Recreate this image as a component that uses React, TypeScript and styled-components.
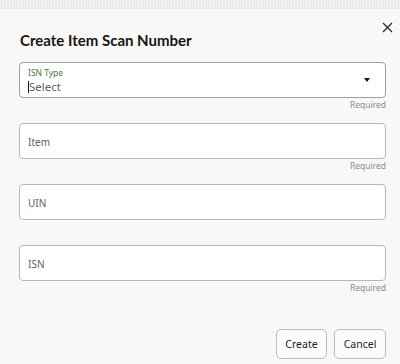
import React from "react";
import styled, { createGlobalStyle } from "styled-components";

const Global = createGlobalStyle`
  html, body { margin: 0; padding: 0; background: #f9f8f6; }
  body { font-family: "Noto Sans", "Open Sans", Arial, sans-serif; }
  * { box-sizing: border-box; }
`;

const Page = styled.div`
  width: 400px;
  height: 364px;
  overflow: hidden;
  background: #f9f8f6;
  display: flex;
  flex-direction: column;
`;

const TopStrip = styled.div`
  height: 9px;
  flex: none;
  background-color: #efeeec;
  background-image: repeating-linear-gradient(
      90deg,
      rgba(255, 255, 255, 0.5) 0 1px,
      transparent 1px 3px
    ),
    repeating-linear-gradient(0deg, rgba(0, 0, 0, 0.03) 0 1px, transparent 1px 2px);
`;

const Dialog = styled.div`
  padding: 0 14px 0 19px;
  display: flex;
  flex-direction: column;
`;

const Header = styled.div`
  display: flex;
  justify-content: space-between;
  align-items: flex-start;
  height: 53px;
`;

const Title = styled.h1`
  margin: 21px 0 0 1px;
  font-family: Lato, "Noto Sans", Arial, sans-serif;
  font-size: 15px;
  font-weight: 700;
  line-height: 20px;
  color: #161513;
  letter-spacing: 0;
`;

const Close = styled.button`
  margin: 10px -9px 0 0;
  width: 16px;
  height: 16px;
  padding: 0;
  border: none;
  background: none;
  display: flex;
  align-items: center;
  justify-content: center;
  cursor: pointer;
`;

const Field = styled.div`
  display: flex;
  flex-direction: column;
  height: 61px;
`;

const Box = styled.div<{ focus?: boolean }>`
  height: 36px;
  background: #ffffff;
  border: 1px solid ${(p) => (p.focus ? "#9e9e9a" : "#b9b8b5")};
  border-radius: 4px;
  display: flex;
  align-items: center;
  padding: 0 8px 0 8px;
  position: relative;
`;

const Stack = styled.div`
  display: flex;
  flex-direction: column;
  flex: 1;
`;

const SmallLabel = styled.span`
  font-size: 8.5px;
  line-height: 11px;
  color: #4e7a3d;
`;

const ValueRow = styled.span`
  display: flex;
  align-items: center;
  margin-top: 2px;
  font-size: 11.5px;
  line-height: 14px;
  color: #62615d;
`;

const Caret = styled.span`
  width: 1px;
  height: 12px;
  background: #1a1a1a;
`;

const Placeholder = styled.span`
  font-size: 10px;
  color: #5f5e5a;
  padding-top: 1px;
`;

const Arrow = styled.span`
  width: 0;
  height: 0;
  border-left: 3.5px solid transparent;
  border-right: 3.5px solid transparent;
  border-top: 4px solid #161513;
  margin-right: 7px;
`;

const Helper = styled.div`
  height: 13px;
  text-align: right;
  font-size: 8.5px;
  line-height: 13px;
  color: #8c8b88;
`;

const Footer = styled.div`
  display: flex;
  justify-content: flex-end;
  gap: 7px;
  margin-top: 23px;
`;

const Button = styled.button<{ w: number }>`
  width: ${(p) => p.w}px;
  height: 30px;
  background: #fbfbfa;
  border: 1px solid #bdbcb9;
  border-radius: 5px;
  font-family: "Noto Sans", "Open Sans", Arial, sans-serif;
  font-size: 10.5px;
  color: #1d1c1a;
  padding: 0;
  cursor: pointer;
`;

const XIcon = () => (
  <svg width="11" height="11" viewBox="0 0 11 11">
    <path d="M1 1 L10 10 M10 1 L1 10" stroke="#2b2a28" strokeWidth="1.3" />
  </svg>
);

const TextField = ({ label, required }: { label: string; required?: boolean }) => (
  <Field>
    <Box>
      <Placeholder>{label}</Placeholder>
    </Box>
    <Helper>{required ? "Required" : ""}</Helper>
  </Field>
);

export default function App() {
  return (
    <Page>
      <Global />
      <TopStrip />
      <Dialog>
        <Header>
          <Title>Create Item Scan Number</Title>
          <Close aria-label="Close">
            <XIcon />
          </Close>
        </Header>
        <Field>
          <Box focus>
            <Stack>
              <SmallLabel>ISN Type</SmallLabel>
              <ValueRow>
                <Caret />
                Select
              </ValueRow>
            </Stack>
            <Arrow />
          </Box>
          <Helper>Required</Helper>
        </Field>
        <TextField label="Item" required />
        <TextField label="UIN" />
        <TextField label="ISN" required />
        <Footer>
          <Button w={51}>Create</Button>
          <Button w={52}>Cancel</Button>
        </Footer>
      </Dialog>
    </Page>
  );
}
